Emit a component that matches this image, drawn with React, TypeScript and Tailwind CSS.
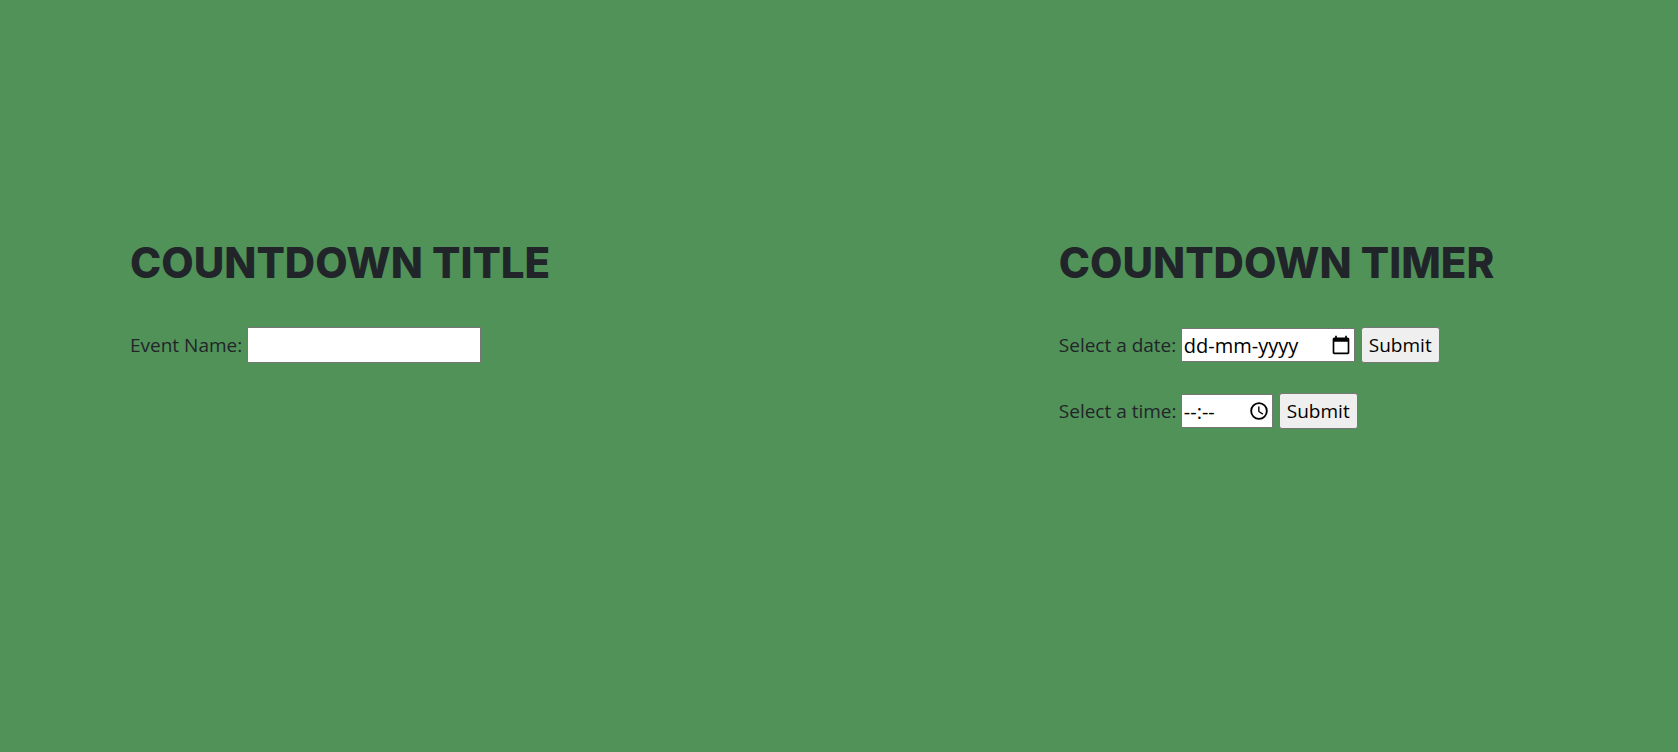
import type { ReactNode } from "react";

const field =
  "border border-[#767676] bg-white px-0.5 text-xl text-black placeholder:text-black placeholder:opacity-100";

function Heading({ children }: { children: ReactNode }) {
  return (
    <h1 className="mb-10 whitespace-nowrap font-['Inter',sans-serif] text-[42px] font-extrabold leading-12 text-[#212529]">
      {children}
    </h1>
  );
}

function CalendarIcon() {
  return (
    <svg viewBox="0 0 24 24" className="size-5" fill="currentColor" aria-hidden="true">
      <path d="M20 3h-1V1h-2v2H7V1H5v2H4c-1.1 0-2 .9-2 2v16c0 1.1.9 2 2 2h16c1.1 0 2-.9 2-2V5c0-1.1-.9-2-2-2zm0 18H4V8h16v13z" />
    </svg>
  );
}

function ClockIcon() {
  return (
    <svg viewBox="0 0 24 24" className="size-5" fill="currentColor" aria-hidden="true">
      <path d="M12 1.500a10.500 10.500 0 1 0 0 21 10.500 10.500 0 0 0 0-21zm0 18.800a8.300 8.300 0 1 1 0-16.600 8.300 8.300 0 0 1 0 16.600z" />
      <path d="M12.600 6.500H11v6.500l5.250 3.350.85-1.330-4.500-2.770z" />
    </svg>
  );
}

type PickerProps = {
  id: string;
  label: string;
  placeholder: string;
  width: string;
  icon: ReactNode;
};

function PickerRow({ id, label, placeholder, width, icon }: PickerProps) {
  return (
    <form className="flex items-center" onSubmit={(e) => e.preventDefault()}>
      <label htmlFor={id} className="w-[122px] whitespace-nowrap">
        {label}
      </label>
      <div className={`relative ${width}`}>
        <input id={id} type="text" placeholder={placeholder} className={`block h-[34px] w-full ${field}`} />
        <button
          type="button"
          aria-label="Open picker"
          className="absolute inset-y-0 right-1 flex items-center text-black"
        >
          {icon}
        </button>
      </div>
      <button
        type="submit"
        className="ml-1.5 h-9 rounded-[3px] border border-[#767676] bg-[#efefef] px-[7px] text-black"
      >
        Submit
      </button>
    </form>
  );
}

export default function App() {
  return (
    <main className="grid min-h-screen grid-cols-[60%_40%] content-start bg-[#519259] pt-[239px] pl-[130px] font-['Open_Sans','Noto_Sans',sans-serif] text-[19px] leading-7 text-[#212529]">
      <section>
        <Heading>COUNTDOWN TITLE</Heading>
        <div className="flex items-center">
          <label htmlFor="event-name" className="w-[117px] whitespace-nowrap">
            Event Name:
          </label>
          <input id="event-name" type="text" className={`h-9 w-[234px] ${field}`} />
        </div>
      </section>
      <section>
        <Heading>COUNTDOWN TIMER</Heading>
        <div className="flex flex-col gap-[30px]">
          <PickerRow
            id="event-date"
            label="Select a date:"
            placeholder="dd-mm-yyyy"
            width="w-[174px]"
            icon={<CalendarIcon />}
          />
          <PickerRow
            id="event-time"
            label="Select a time:"
            placeholder="--:--"
            width="w-[92px]"
            icon={<ClockIcon />}
          />
        </div>
      </section>
    </main>
  );
}
